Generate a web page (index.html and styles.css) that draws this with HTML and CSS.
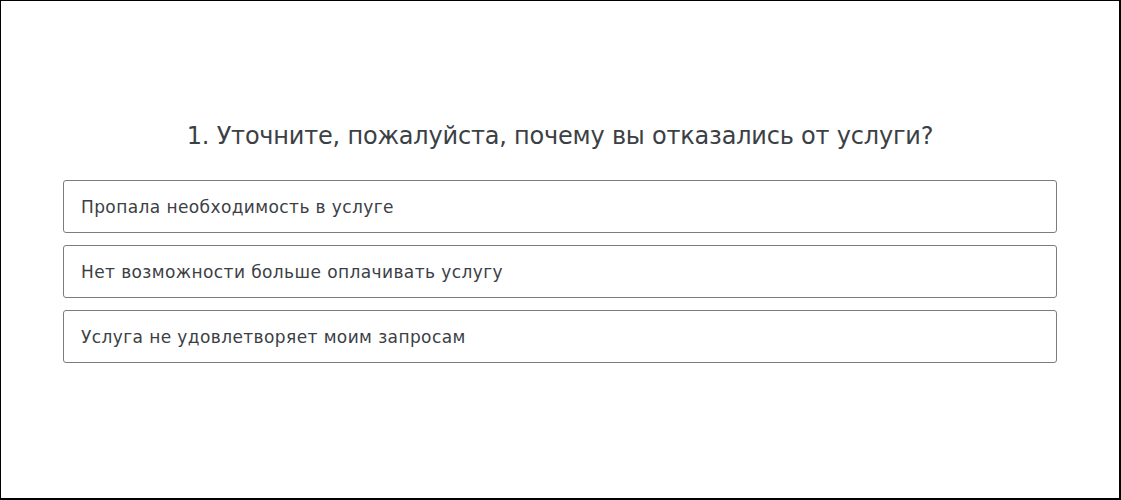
FILE: index.html
```html
<!DOCTYPE html>
<html>
<head>
    <title>Опрос</title>
    <link rel="stylesheet" href="styles.css">
</head>
<body>
    <div class="survey">
        <h1 class="survey__question">1. Уточните, пожалуйста, почему вы отказались от услуги?</h1>
        <div class="survey__options">
            <div class="survey__option">Пропала необходимость в услуге</div>
            <div class="survey__option">Нет возможности больше оплачивать услугу</div>
            <div class="survey__option">Услуга не удовлетворяет моим запросам</div>
        </div>
    </div>
</body>
</html>
```

FILE: styles.css
```css
* {
    margin: 0;
    padding: 0;
    box-sizing: border-box;
}

body {
    font-family: "DejaVu Sans", "Noto Sans", sans-serif;
    background: #ffffff;
    color: #3b4045;
}

.survey {
    width: 1121px;
    height: 500px;
    border: 1px solid #000000;
    border-right-width: 2px;
    border-bottom-width: 2px;
    padding: 114px 62px 0 62px;
}

.survey__question {
    font-size: 24px;
    font-weight: 400;
    letter-spacing: -0.2px;
    text-align: center;
    line-height: 42px;
    margin-bottom: 23px;
}

.survey__options {
    display: flex;
    flex-direction: column;
    gap: 12px;
}

.survey__option {
    height: 53px;
    border: 1px solid #7a7d80;
    border-radius: 3px;
    padding: 0 17px;
    display: flex;
    align-items: center;
    font-size: 17px;
    letter-spacing: 0.4px;
}
```
